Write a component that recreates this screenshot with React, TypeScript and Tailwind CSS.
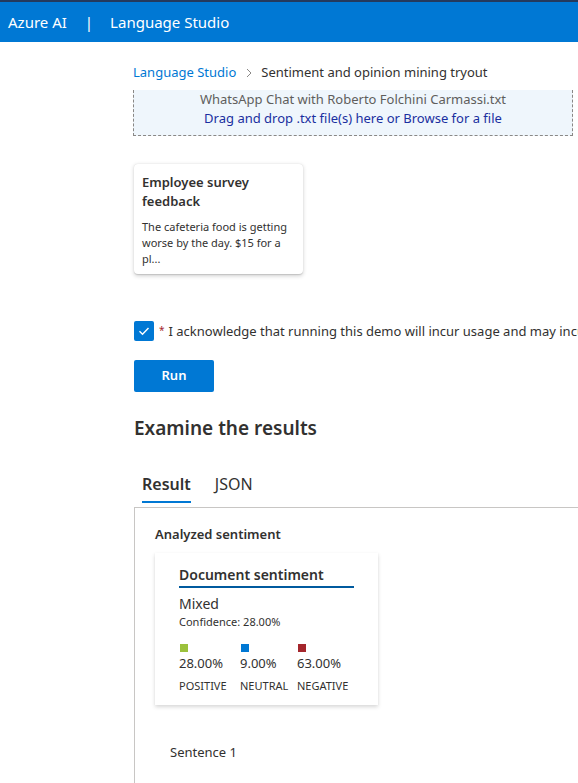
import React from "react";

export default function App() {
  const font = { fontFamily: '"Noto Sans", "Open Sans", sans-serif' };
  return (
    <div className="w-[578px] h-[783px] overflow-hidden bg-white text-[#323130]" style={font}>
      <div className="h-[2px] bg-[#243a5e]" />
      <div className="flex h-[40px] items-center bg-[#0078d4] pl-[8px] text-[15px] text-white">
        <span>Azure AI</span>
        <span className="ml-[18px] mr-[17px]">|</span>
        <span>Language Studio</span>
      </div>

      <div className="relative pl-[133px]">
        <div className="flex h-[40px] items-center pt-[21px] text-[13px]">
          <span className="text-[#0078d4]">Language Studio</span>
          <svg className="ml-[9px] mr-[8px]" width="8" height="10" viewBox="0 0 8 10">
            <path d="M2 1l4 4-4 4" fill="none" stroke="#8a8886" strokeWidth="1" />
          </svg>
          <span>Sentiment and opinion mining tryout</span>
        </div>

        <div className="mt-[8px] flex h-[46px] w-[440px] flex-col items-center justify-start border-x border-b border-dashed border-[#8a8886] bg-[#eff6fc] text-[13px] leading-[19px]">
          <span className="text-[#605e5c]">WhatsApp Chat with Roberto Folchini Carmassi.txt</span>
          <span className="text-[#1a2fa0]">Drag and drop .txt file(s) here or Browse for a file</span>
        </div>

        <div className="mt-[28px] ml-[1px] h-[110px] w-[169px] rounded-[4px] bg-white px-[8px] pt-[9px] shadow-[0_1.6px_4px_rgba(0,0,0,0.18),0_0.3px_1px_rgba(0,0,0,0.12)]">
          <div className="text-[13px] font-semibold leading-[19px]">Employee survey feedback</div>
          <div className="mt-[8px] text-[11px] leading-[16px]">
            The cafeteria food is getting worse by the day. $15 for a pl...
          </div>
        </div>

        <div className="mt-[46px] flex items-center overflow-hidden whitespace-nowrap">
          <div className="ml-[1px] flex h-[20px] w-[20px] shrink-0 items-center justify-center rounded-[2px] bg-[#0078d4]">
            <svg width="12" height="10" viewBox="0 0 12 10">
              <path d="M1.5 5.2l3 3L10.5 2" fill="none" stroke="white" strokeWidth="1.4" />
            </svg>
          </div>
          <span className="ml-[5px] text-[10px] text-[#a4262c]">*</span>
          <span className="ml-[4px] pt-[2px] text-[13px]">
            I acknowledge that running this demo will incur usage and may incur costs
          </span>
        </div>

        <button className="mt-[18px] ml-[1px] h-[32px] w-[80px] rounded-[2px] bg-[#0078d4] text-[13px] font-semibold text-white">
          Run
        </button>

        <div className="mt-[23px] ml-[1px] text-[19px] font-semibold leading-[26px]">Examine the results</div>

        <div className="mt-[32px] ml-[9px] flex text-[16px] leading-[22px]">
          <div className="flex flex-col">
            <span className="font-semibold">Result</span>
            <div className="mt-[6px] h-[2px] bg-[#0078d4]" />
          </div>
          <span className="ml-[24px]">JSON</span>
        </div>

        <div className="mt-[4px] ml-[1px] h-[300px] border-l border-t border-[#c8c6c4] pl-[20px] pt-[17px]">
          <div className="text-[13px] font-semibold">Analyzed sentiment</div>
          <div className="mt-[9px] h-[152px] w-[223px] bg-white px-[24px] pt-[12px] shadow-[0_1.6px_4px_rgba(0,0,0,0.16),0_0.3px_1px_rgba(0,0,0,0.1)]">
            <div className="border-b-2 border-[#005a9e] pb-[1px] text-[14px] font-semibold leading-[20px]">
              Document sentiment
            </div>
            <div className="mt-[7px] text-[14px] leading-[18px]">Mixed</div>
            <div className="text-[11px] leading-[17px]">Confidence: 28.00%</div>
            <div className="mt-[14px] flex text-[13px]">
              <div className="flex w-[61px] flex-col">
                <div className="ml-[1px] h-[8px] w-[8px] bg-[#9bc13c]" />
                <span className="mt-[2px] leading-[18px]">28.00%</span>
                <span className="mt-[7px] text-[11px] leading-[14px]">POSITIVE</span>
              </div>
              <div className="flex w-[57px] flex-col">
                <div className="ml-[1px] h-[8px] w-[8px] bg-[#0078d4]" />
                <span className="mt-[2px] leading-[18px]">9.00%</span>
                <span className="mt-[7px] text-[11px] leading-[14px]">NEUTRAL</span>
              </div>
              <div className="flex flex-col">
                <div className="ml-[1px] h-[8px] w-[8px] bg-[#a4262c]" />
                <span className="mt-[2px] leading-[18px]">63.00%</span>
                <span className="mt-[7px] text-[11px] leading-[14px]">NEGATIVE</span>
              </div>
            </div>
          </div>
          <div className="mt-[38px] ml-[15px] text-[13px]">Sentence 1</div>
        </div>
      </div>
    </div>
  );
}
